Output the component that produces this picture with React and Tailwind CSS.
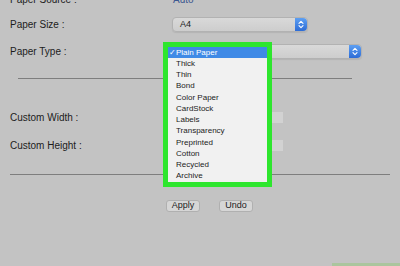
import React from 'react';

const menuItems = ['Plain Paper', 'Thick', 'Thin', 'Bond', 'Color Paper', 'CardStock', 'Labels', 'Transparency', 'Preprinted', 'Cotton', 'Recycled', 'Archive'];

function Stepper() {
    return (
        <div className="w-[12px] h-full rounded-r-[4px] bg-gradient-to-b from-[#5d9ff2] to-[#2d6cd6] flex items-center justify-center">
            <svg width="6" height="9" viewBox="0 0 6 9" fill="none" stroke="#ffffff" strokeWidth="1.1" strokeLinecap="round" strokeLinejoin="round">
                <path d="M1 3.3 L3 1.3 L5 3.3" />
                <path d="M1 5.7 L3 7.7 L5 5.7" />
            </svg>
        </div>
    );
}

function Select({ width, value }) {
    return (
        <div className={`${width} h-[15px] flex items-stretch rounded-[4px] border border-[#b2b2b2] bg-gradient-to-b from-[#d9d9d9] to-[#cdcdcd] shadow-[0_1px_1px_rgba(0,0,0,0.08)]`}>
            <div className="flex-1 flex items-center pl-[7px] text-[9px] text-[#1c1c1c]">{value}</div>
            <Stepper />
        </div>
    );
}

function Button({ children }) {
    return (
        <div className="w-[34px] h-[12px] flex items-center justify-center rounded-[3px] border border-[#b0b0b0] bg-[#d6d6d6] text-[9px] text-[#1c1c1c]">
            {children}
        </div>
    );
}

export default function App() {
    return (
        <div className="relative w-[400px] h-[266px] overflow-hidden bg-[#c3c3c3] font-['Liberation_Sans',Arial,sans-serif] text-[#1c1c1c]">
            <div className="flex flex-col">
                {/* Paper Source */}
                <div className="mt-[-8px] h-[14px] flex items-center">
                    <div className="w-[173px] pl-[10px] text-[10px]">Paper Source :</div>
                    <div className="text-[10px] text-[#3a5690]">Auto</div>
                </div>

                {/* Paper Size */}
                <div className="mt-[11px] h-[15px] flex items-center">
                    <div className="w-[172px] pl-[10px] text-[10px]">Paper Size :</div>
                    <Select width="w-[136px]" value="A4" />
                </div>

                {/* Paper Type - value is covered by the open menu */}
                <div className="mt-[12px] h-[15px] flex items-center">
                    <div className="w-[172px] pl-[10px] text-[10px]">Paper Type :</div>
                    <Select width="w-[190px]" value="" />
                </div>

                <div className="mt-[19px] ml-[18px] w-[334px] h-px bg-[#7e7e7e]" />

                {/* Custom Width */}
                <div className="mt-[33px] h-[11px] flex items-center">
                    <div className="w-[172px] pl-[10px] text-[10px]">Custom Width :</div>
                    <div className="w-[111px] h-[11px] bg-[#d2d2d2]" />
                </div>

                {/* Custom Height */}
                <div className="mt-[17px] h-[11px] flex items-center">
                    <div className="w-[172px] pl-[10px] text-[10px]">Custom Height :</div>
                    <div className="w-[111px] h-[11px] bg-[#d2d2d2]" />
                </div>

                <div className="mt-[23px] ml-[10px] w-[380px] h-px bg-[#7e7e7e]" />

                <div className="mt-[25px] ml-[166px] flex gap-[19px]">
                    <Button>Apply</Button>
                    <Button>Undo</Button>
                </div>
            </div>

            {/* Open popup menu, highlighted */}
            <div className="absolute left-[163px] top-[42px] w-[109px] h-[145px] border-[5px] border-[#2ee62e] bg-[#f1f1f1]">
                {menuItems.map((item, i) => (
                    <div
                        key={item}
                        className={`h-[11.25px] flex items-center text-[8px] leading-none ${i === 0 ? 'bg-[#3f8ae6] text-white' : 'text-[#1c1c1c]'}`}
                    >
                        <span className="w-[8px] pl-[1px] text-[8px]">{i === 0 ? '✓' : ''}</span>
                        {item}
                    </div>
                ))}
            </div>

            <div className="absolute right-0 bottom-0 w-[68px] h-[3px] bg-[#abc59e]" />
        </div>
    );
}
